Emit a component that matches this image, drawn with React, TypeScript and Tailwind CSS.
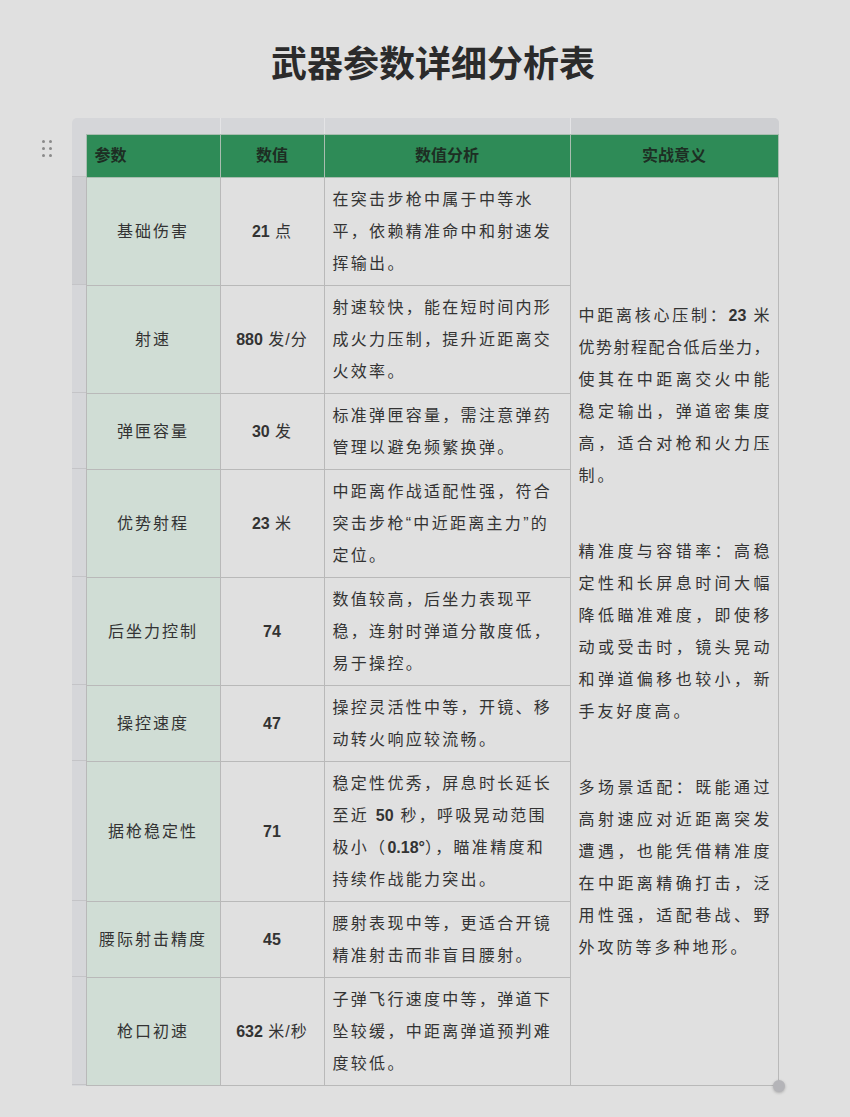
import React from "react";

interface Row {
  name: string;
  value: string;
  h: number;
  lines: string[];
}

const rows: Row[] = [
  { name: "基础伤害", value: "21 点", h: 108, lines: ["在突击步枪中属于中等水", "平，依赖精准命中和射速发", "挥输出。"] },
  { name: "射速", value: "880 发/分", h: 108, lines: ["射速较快，能在短时间内形", "成火力压制，提升近距离交", "火效率。"] },
  { name: "弹匣容量", value: "30 发", h: 76, lines: ["标准弹匣容量，需注意弹药", "管理以避免频繁换弹。"] },
  { name: "优势射程", value: "23 米", h: 108, lines: ["中距离作战适配性强，符合", "突击步枪“中近距离主力”的", "定位。"] },
  { name: "后坐力控制", value: "74", h: 108, lines: ["数值较高，后坐力表现平", "稳，连射时弹道分散度低，", "易于操控。"] },
  { name: "操控速度", value: "47", h: 76, lines: ["操控灵活性中等，开镜、移", "动转火响应较流畅。"] },
  { name: "据枪稳定性", value: "71", h: 140, lines: ["稳定性优秀，屏息时长延长", "至近 50 秒，呼吸晃动范围", "极小（0.18°），瞄准精度和", "持续作战能力突出。"] },
  { name: "腰际射击精度", value: "45", h: 76, lines: ["腰射表现中等，更适合开镜", "精准射击而非盲目腰射。"] },
  { name: "枪口初速", value: "632 米/秒", h: 108, lines: ["子弹飞行速度中等，弹道下", "坠较缓，中距离弹道预判难", "度较低。"] },
];

const meaning: string[][] = [
  ["中距离核心压制：23 米", "优势射程配合低后坐力，", "使其在中距离交火中能", "稳定输出，弹道密集度", "高，适合对枪和火力压", "制。"],
  ["精准度与容错率：高稳", "定性和长屏息时间大幅", "降低瞄准难度，即使移", "动或受击时，镜头晃动", "和弹道偏移也较小，新", "手友好度高。"],
  ["多场景适配：既能通过", "高射速应对近距离突发", "遭遇，也能凭借精准度", "在中距离精确打击，泛", "用性强，适配巷战、野", "外攻防等多种地形。"],
];

function rich(text: string) {
  return text.split(/(\d+(?:\.\d+)?°?)/).map((part, i) =>
    /^\d/.test(part) ? (
      <b key={i} className="font-bold tracking-normal">
        {part}
      </b>
    ) : (
      <span key={i}>{part}</span>
    )
  );
}

export default function App() {
  return (
    <div className="min-h-screen bg-[#e0e0e0] font-['Liberation_Sans','Noto_Sans_CJK_SC',sans-serif] text-[#333]">
      <h1 className="pt-[38px] pl-4 text-center text-[36px] leading-[54px] font-bold text-[#2b2b2b]">
        武器参数详细分析表
      </h1>

      <div className="relative mx-auto mt-[26px] w-[707px]">
        {/* drag handle */}
        <div className="absolute left-[-30px] top-[22px] grid grid-cols-2 gap-x-[4px] gap-y-[4px]">
          {[0, 1, 2, 3, 4, 5].map((d) => (
            <span key={d} className="h-[3px] w-[3px] rounded-full bg-[#8a8a8a]" />
          ))}
        </div>

        {/* top strip */}
        <div className="flex h-[16px] overflow-hidden rounded-t-[5px] bg-[#d5d6d9]">
          <div className="w-[15px]" />
          <div className="w-[134px] border-r border-[#e4e4e6]" />
          <div className="w-[104px] border-r border-[#e4e4e6]" />
          <div className="w-[246px] border-r border-[#e4e4e6]" />
          <div className="flex-1 bg-[#cecfd2]" />
        </div>

        <div className="flex">
          {/* left strip */}
          <div className="flex w-[15px] flex-col bg-[#d5d6d9]">
            <div className="h-[43px] border-b border-[#c4c4c7]" />
            {rows.map((r, i) => (
              <div
                key={r.name}
                style={{ height: r.h }}
                className={i === 0 ? "border-b border-[#c4c4c7] bg-[#cdced1]" : "border-b border-[#c4c4c7]"}
              />
            ))}
          </div>

          <table className="w-[692px] table-fixed border-collapse text-[16px] leading-[32px]">
            <colgroup>
              <col className="w-[134px]" />
              <col className="w-[104px]" />
              <col className="w-[246px]" />
              <col className="w-[208px]" />
            </colgroup>
            <thead>
              <tr className="h-[43px] bg-[#2e8b57] text-[#1d2e23]">
                <th className="border border-[#a9bdb0] px-[8px] text-left font-bold">参数</th>
                <th className="border border-[#a9bdb0] text-center font-bold">数值</th>
                <th className="border border-[#a9bdb0] text-center font-bold">数值分析</th>
                <th className="border border-[#a9bdb0] text-center font-bold">实战意义</th>
              </tr>
            </thead>
            <tbody>
              {rows.map((r, i) => {
                const m = r.value.match(/^(\d+)(.*)$/);
                return (
                  <tr key={r.name} style={{ height: r.h }}>
                    <td className="border border-[#b9b9b9] bg-[#d0ddd5] text-center align-middle tracking-[2px]">
                      {r.name}
                    </td>
                    <td className="border border-[#b9b9b9] text-center align-middle">
                      <b className="font-bold">{m ? m[1] : r.value}</b>
                      <span className="tracking-[1px]">{m ? m[2] : ""}</span>
                    </td>
                    <td className="border border-[#b9b9b9] px-[8px] align-middle tracking-[2.3px]">
                      {r.lines.map((l) => (
                        <div key={l} className="whitespace-nowrap">
                          {rich(l)}
                        </div>
                      ))}
                    </td>
                    {i === 0 && (
                      <td rowSpan={rows.length} className="border border-[#b9b9b9] px-[8px] align-middle">
                        <div className="flex flex-col gap-[44px]">
                          {meaning.map((p, pi) => (
                            <div key={pi}>
                              {p.map((l, li) =>
                                li < p.length - 1 ? (
                                  <div key={li} className="whitespace-nowrap text-justify [text-align-last:justify]">
                                    {rich(l)}
                                  </div>
                                ) : (
                                  <div key={li} className="whitespace-nowrap tracking-[3px]">
                                    {rich(l)}
                                  </div>
                                )
                              )}
                            </div>
                          ))}
                        </div>
                      </td>
                    )}
                  </tr>
                );
              })}
            </tbody>
          </table>
        </div>

        {/* resize handle */}
        <span className="absolute bottom-[-6px] right-[-6px] h-[12px] w-[12px] rounded-full bg-[#b4b4b8] shadow-[0_1px_3px_rgba(0,0,0,0.25)]" />
      </div>
    </div>
  );
}
